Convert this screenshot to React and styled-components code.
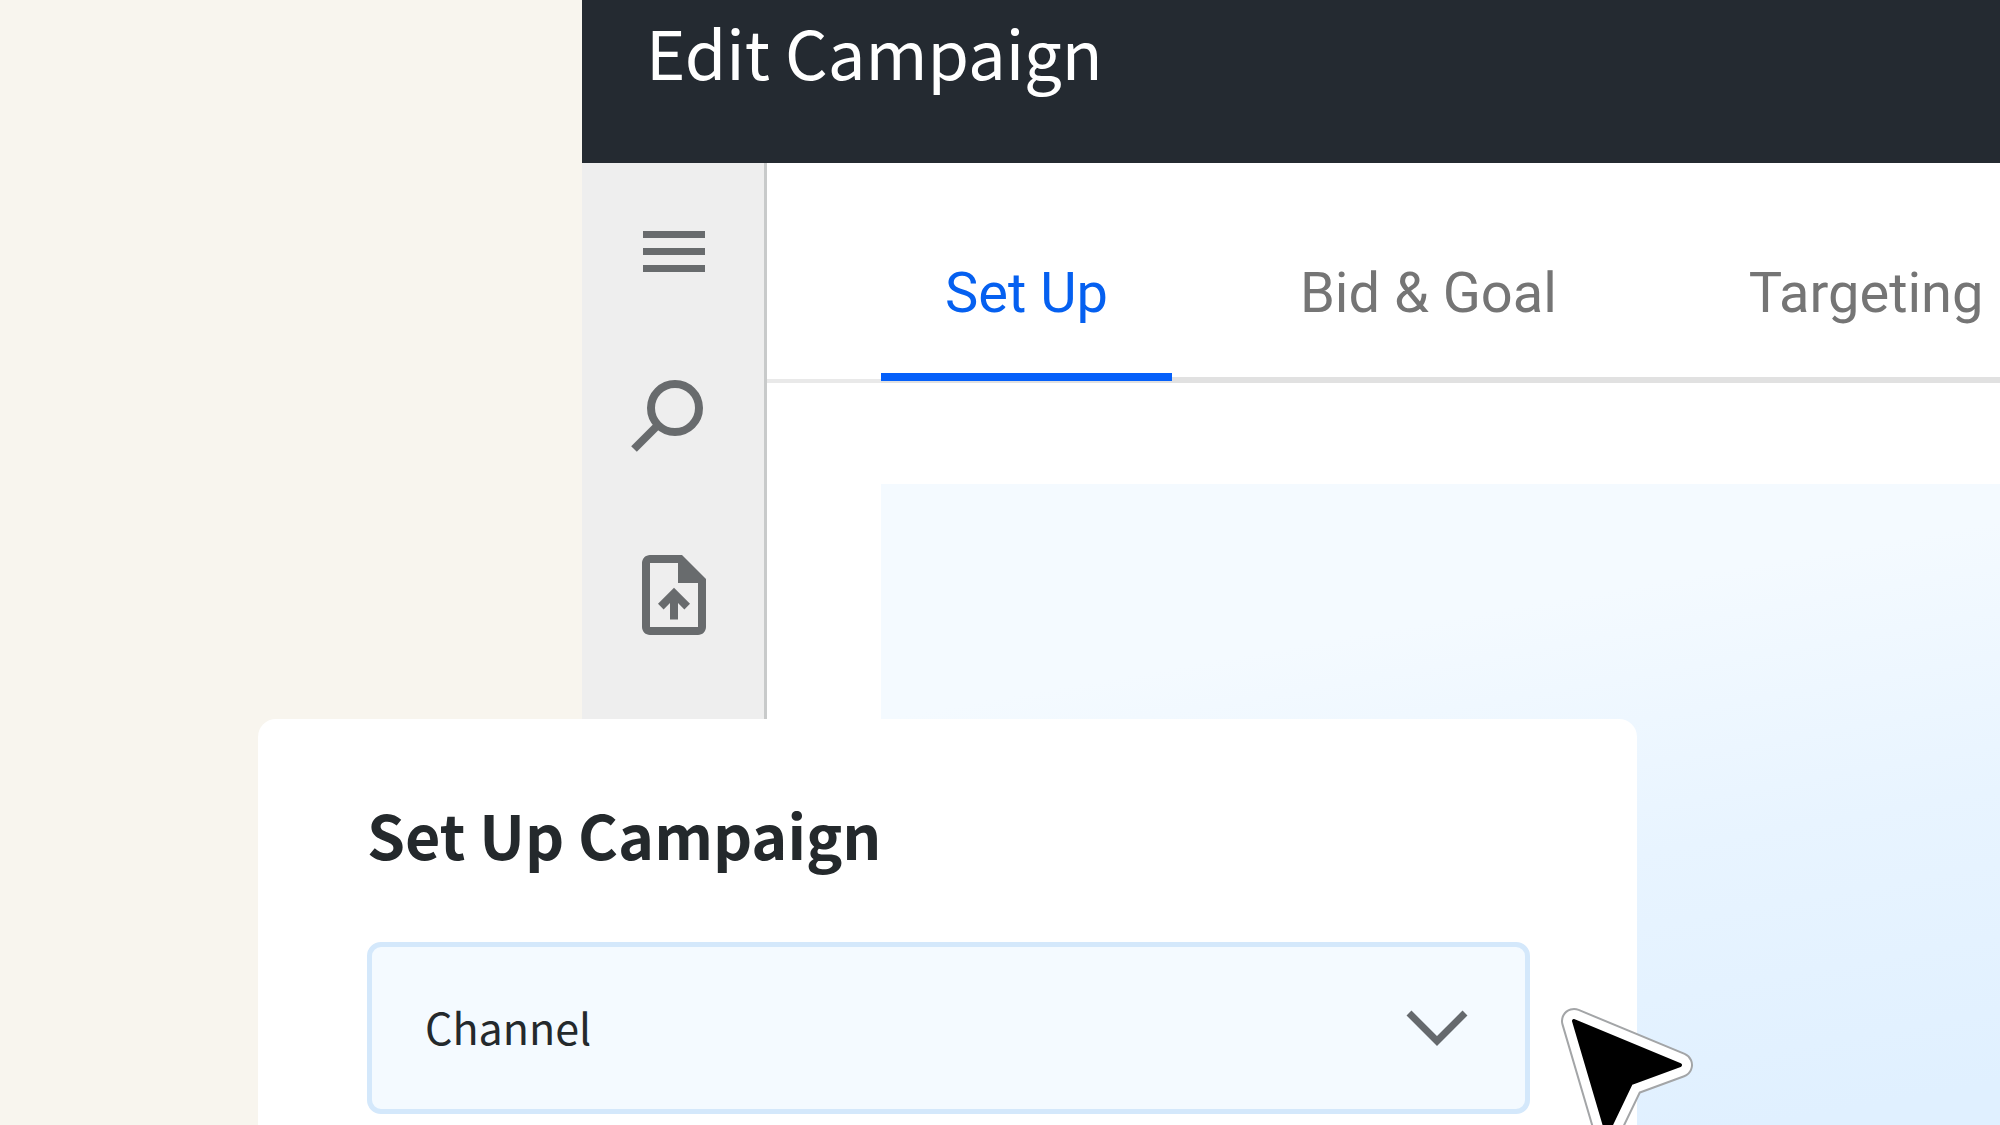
import React, { useState } from 'react'
import styled, { createGlobalStyle } from 'styled-components'

const GlobalStyle = createGlobalStyle`
	* {
		box-sizing: border-box;
	}

	body {
		margin: 0;
		background-color: #f8f5ee;
	}
`

const sans = `"Noto Sans CJK SC", "Noto Sans", sans-serif`

const Page = styled.div`
	position: relative;
	display: flex;
	height: 100vh;
	padding-left: 582px;
	overflow: hidden;
	color: #24292c;
	font-family: ${sans};
`

const Window = styled.div`
	display: flex;
	flex: 1;
	flex-direction: column;
	min-width: 0;
	background-color: #fff;
`

const Topbar = styled.header`
	padding: 0 64px 61px;
	background-color: #242a31;
`

const PageTitle = styled.h1`
	margin: 0;
	color: #fff;
	font-size: 67px;
	font-weight: 400;
	line-height: 102px;
`

const Body = styled.div`
	display: flex;
	flex: 1;
`

const Sidebar = styled.nav`
	display: flex;
	flex-direction: column;
	align-items: center;
	gap: 76px;
	width: 185px;
	padding: 40px 0 0 2px;
	background-color: #eeeeee;
	border-right: 3px solid #c8caca;
`

const IconButton = styled.button`
	display: flex;
	padding: 0;
	border: 0;
	background: none;
	color: #686b6d;
	cursor: pointer;
`

const Icon = styled.svg`
	width: 96px;
	height: 96px;
	fill: currentColor;
`

const Main = styled.main`
	display: flex;
	flex: 1;
	flex-direction: column;
	min-width: 0;
`

const TabBar = styled.div`
	display: flex;
	align-items: flex-end;
`

const TabBarEdge = styled.div`
	flex: 0 0 114px;
	height: 4px;
	background-color: #e9e9e9;
`

const TabList = styled.div`
	display: flex;
	flex: 1;
	gap: 64px;
	min-width: 0;
	border-bottom: 6px solid #e1e1e1;
`

const Tab = styled.button`
	flex-shrink: 0;
	margin: 0 0 -4px;
	padding: 98px 64px 48px;
	border: 0;
	border-bottom: 8px solid ${props => props.$active ? '#0560fa' : 'transparent'};
	background: none;
	color: ${props => props.$active ? '#0560f0' : '#757575'};
	font-family: Roboto, sans-serif;
	font-size: 56px;
	line-height: 64px;
	cursor: pointer;
`

const Canvas = styled.div`
	flex: 1;
	margin: 101px 0 0 114px;
	background: linear-gradient(170deg, #f4faff 28%, #e8f4ff 60%, #e0f0ff 95%);
`

const Card = styled.section`
	position: absolute;
	top: 719px;
	left: 258px;
	right: 363px;
	padding: 75px 107px 109px 109px;
	border-radius: 18px;
	background-color: #fff;
`

const CardTitle = styled.h2`
	margin: 0 0 68px;
	font-size: 61px;
	font-weight: 600;
	line-height: 80px;
`

const SelectBox = styled.div`
	display: grid;
	align-items: center;

	> * {
		grid-area: 1 / 1;
	}
`

const Select = styled.select`
	width: 100%;
	height: 172px;
	padding: 0 160px 4px 53px;
	border: 5px solid #d4e8fb;
	border-radius: 14px;
	appearance: none;
	background-color: #f4faff;
	color: #24292c;
	font-family: ${sans};
	font-size: 43px;
`

const Chevron = styled.svg`
	justify-self: end;
	width: 62px;
	height: 38px;
	margin-right: 62px;
	fill: none;
	stroke: #65696d;
	stroke-width: 7;
	pointer-events: none;
`

const Pointer = styled.svg`
	position: absolute;
	top: 1000px;
	left: 1552px;
	width: 150px;
	height: 160px;
	stroke-linejoin: round;
	pointer-events: none;
`

const tabs = ['Set Up', 'Bid & Goal', 'Targeting']

const arrow = 'M22 21L128 65L79 83L55 133Z'

const App = () => {
	const [active, setActive] = useState('Set Up')

	return (
		<Page>
			<GlobalStyle />
			<Window>
				<Topbar>
					<PageTitle>Edit Campaign</PageTitle>
				</Topbar>
				<Body>
					<Sidebar>
						<IconButton aria-label="Menu">
							<Icon viewBox="0 0 96 96">
								<path d="M17 28h62v7H17zM17 45h62v7H17zM17 62h62v7H17z" />
							</Icon>
						</IconButton>
						<IconButton aria-label="Search">
							<Icon viewBox="0 0 96 96">
								<circle cx="49" cy="33" r="24" fill="none" stroke="currentColor" strokeWidth="8" />
								<path d="M33 49L8 74" stroke="currentColor" strokeWidth="8" />
							</Icon>
						</IconButton>
						<IconButton aria-label="Upload file">
							<Icon viewBox="0 0 24 24">
								<path d="M14 2H6c-1.100 0-2 .9-2 2v16c0 1.100.9 2 2 2h12c1.100 0 2-.9 2-2V8zm4 18H6V4h7v5h5zM8 14.200l1.400 1.400L11 14v4.100h2V14l1.600 1.600 1.400-1.400-4-4z" />
							</Icon>
						</IconButton>
					</Sidebar>
					<Main>
						<TabBar>
							<TabBarEdge />
							<TabList role="tablist">
								{tabs.map(tab => (
									<Tab
										key={tab}
										role="tab"
										aria-selected={tab === active}
										$active={tab === active}
										onClick={() => setActive(tab)}
									>
										{tab}
									</Tab>
								))}
							</TabList>
						</TabBar>
						<Canvas />
					</Main>
				</Body>
			</Window>

			<Card>
				<CardTitle>Set Up Campaign</CardTitle>
				<SelectBox>
					<Select aria-label="Channel">
						<option>Channel</option>
					</Select>
					<Chevron viewBox="0 0 62 38">
						<path d="M3 4L31 32L59 4" />
					</Chevron>
				</SelectBox>
			</Card>

			<Pointer viewBox="0 0 150 160">
				<path d={arrow} fill="#a3a5a7" stroke="#a3a5a7" strokeWidth="26" />
				<path d={arrow} fill="#fff" stroke="#fff" strokeWidth="22" />
				<path d={arrow} stroke="#000" strokeWidth="4" />
			</Pointer>
		</Page>
	)
}

export default App
